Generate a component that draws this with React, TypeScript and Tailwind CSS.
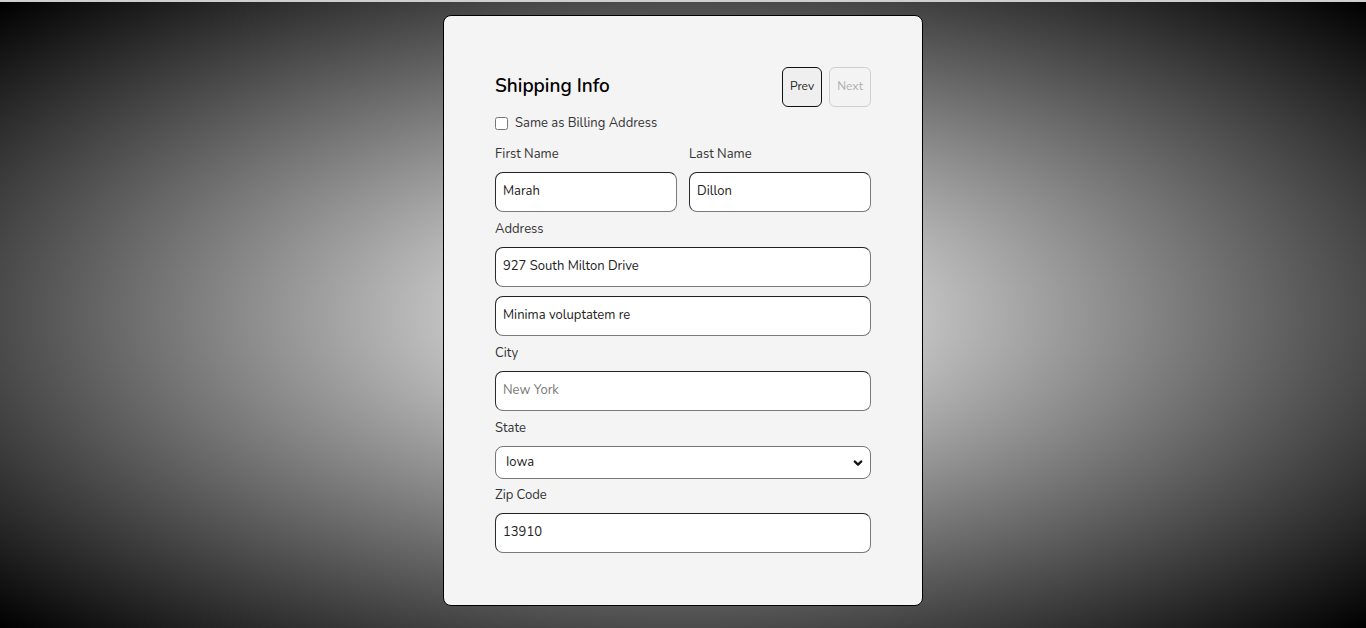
import React, { useState } from 'react';

const inputCls =
  'block w-full h-10 rounded-lg bg-white border border-t-[#222] border-l-[#2a2a2a] border-r-[#7a7a7a] border-b-[#7a7a7a] px-[7px] pb-[2px] text-[13px] text-[#222] placeholder:text-[#777] outline-none';

const Label: React.FC<{ children: React.ReactNode; className?: string }> = ({ children, className = '' }) => (
  <label className={`block h-5 leading-[22px] text-[13px] text-[#333] ${className}`}>{children}</label>
);

export default function App() {
  const [same, setSame] = useState(false);
  const [state, setState] = useState('Iowa');

  return (
    <div
      className="h-[628px] w-full overflow-hidden border-t-2 border-[#cfcfcf] bg-[radial-gradient(#ffffff,#000000)] pt-[13px]"
      style={{ fontFamily: 'Nunito, Lato, "Noto Sans", sans-serif' }}
    >
      <div className="mx-auto w-[480px] rounded-lg border border-black bg-[#f4f4f4] px-[51px] pt-[51px] pb-[52px]">
        {/* header */}
        <div className="flex h-10 items-center justify-between">
          <h2 className="mb-[2px] text-[19px] font-semibold text-black">Shipping Info</h2>
          <div className="flex gap-[7px]">
            <button className="h-10 w-10 rounded-md border border-[#111] bg-[#efefef] pb-[3px] text-[12px] text-[#222]">
              Prev
            </button>
            <button
              disabled
              className="h-10 w-[42px] rounded-md border border-[#cfcfcf] bg-[#f3f3f3] pb-[3px] text-[12px] text-[#b0b0b0]"
            >
              Next
            </button>
          </div>
        </div>

        <label className="mt-[6px] flex h-5 items-center gap-[7px] text-[13px] text-[#333]">
          <input
            type="checkbox"
            checked={same}
            onChange={(e) => setSame(e.target.checked)}
            className="m-0 h-[13px] w-[13px]"
          />
          <span className="pt-[1px]">Same as Billing Address</span>
        </label>

        {/* name */}
        <div className="mt-[10px] grid grid-cols-2 gap-3">
          <div>
            <Label className="mb-[9px]">First Name</Label>
            <input className={inputCls} defaultValue="Marah" />
          </div>
          <div>
            <Label className="mb-[9px]">Last Name</Label>
            <input className={inputCls} defaultValue="Dillon" />
          </div>
        </div>

        <Label className="mt-[6px] mb-[9px]">Address</Label>
        <input className={inputCls} defaultValue="927 South Milton Drive" />
        <input className={`${inputCls} mt-[9px]`} defaultValue="Minima voluptatem re" />

        <Label className="mt-[6px] mb-[9px]">City</Label>
        <input className={inputCls} placeholder="New York" />

        <Label className="mt-[6px] mb-[9px]">State</Label>
        <div className="relative">
          <select
            value={state}
            onChange={(e) => setState(e.target.value)}
            className="block h-[33px] w-full appearance-none rounded-lg border border-[#767676] bg-white pl-[10px] text-[13px] text-[#222] outline-none"
          >
            <option>Iowa</option>
            <option>Idaho</option>
            <option>Illinois</option>
            <option>New York</option>
          </select>
          <svg
            className="pointer-events-none absolute right-[8px] top-1/2 h-[10px] w-[10px] -translate-y-1/2"
            viewBox="0 0 10 10"
            fill="none"
            stroke="#111"
            strokeWidth={2.4}
            strokeLinecap="round"
            strokeLinejoin="round"
          >
            <path d="M1.8 3.5 5 6.6l3.2-3.1" />
          </svg>
        </div>

        <Label className="mt-[5px] mb-[9px]">Zip Code</Label>
        <input className={inputCls} defaultValue="13910" />
      </div>
    </div>
  );
}
